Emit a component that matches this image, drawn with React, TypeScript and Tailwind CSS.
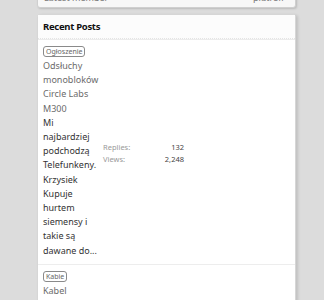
import React from 'react';

const posts = [
  {
    tag: 'Ogłoszenie',
    title: 'Odsłuchy monobloków Circle Labs M300',
    snippet: 'Mi najbardziej podchodzą Telefunkeny. Krzysiek Kupuje hurtem siemensy i takie są dawane do...',
    replies: '132',
    views: '2,248',
  },
  {
    tag: 'Kabie',
    title: 'Kabel',
    snippet: '',
    replies: '',
    views: '',
  },
];

export default function App() {
  return (
    <div className="h-[300px] overflow-hidden bg-[#dcdcdc] pl-[37px] font-['Noto_Sans',sans-serif]">
      <div className="w-[259px]">
        {/* previous panel, mostly scrolled off */}
        <div className="-mt-[13px] rounded-b-[3px] border border-[#cfcfcf] bg-[#f7f7f7] shadow-[1px_1px_2px_rgba(0,0,0,0.15)]">
          <div className="flex h-[19px] items-center justify-between px-[6px] text-[9px] leading-[12px] text-[#777]">
            <span>Latest member</span>
            <span className="pr-[4px]">plutrefr</span>
          </div>
        </div>

        <div className="mt-[6px] rounded-[3px] border border-[#d6d6d6] bg-white shadow-[2px_1px_3px_rgba(0,0,0,0.12)]">
          <div className="flex h-[24px] items-center border-b border-dotted border-[#e4e4e4] bg-[#fcfcfc] px-[5px]">
            <h3 className="text-[9.5px] leading-[12px] font-bold tracking-[-0.3px] text-[#111]">Recent Posts</h3>
          </div>
          <div className="border-t border-[#ececec]">
            {posts.map((p, i) => (
              <div
                key={i}
                className={`flex items-center gap-[3px] px-[5px] py-[6px] ${i > 0 ? 'border-t border-[#ededed]' : ''}`}
              >
                <div className="w-[57px] shrink-0">
                  <div className="flex">
                    <span className="rounded-[3px] border border-[#8a8a8a] px-[2px] text-[7px] leading-[9px] text-[#666]">
                      {p.tag}
                    </span>
                  </div>
                  <div className="mt-[2px] text-[9px] leading-[14.2px] text-[#6b6b6b]">{p.title}</div>
                  {p.snippet && (
                    <div className="text-[9px] leading-[14.2px] text-[#333]">{p.snippet}</div>
                  )}
                </div>
                {p.replies && (
                  <div className="mt-[3px] w-[81px] text-[7.5px] leading-[12px] text-[#999]">
                    <div className="flex justify-between">
                      <span>Replies:</span>
                      <span className="text-[#444]">{p.replies}</span>
                    </div>
                    <div className="flex justify-between">
                      <span>Views:</span>
                      <span className="text-[#444]">{p.views}</span>
                    </div>
                  </div>
                )}
              </div>
            ))}
          </div>
        </div>
      </div>
    </div>
  );
}
